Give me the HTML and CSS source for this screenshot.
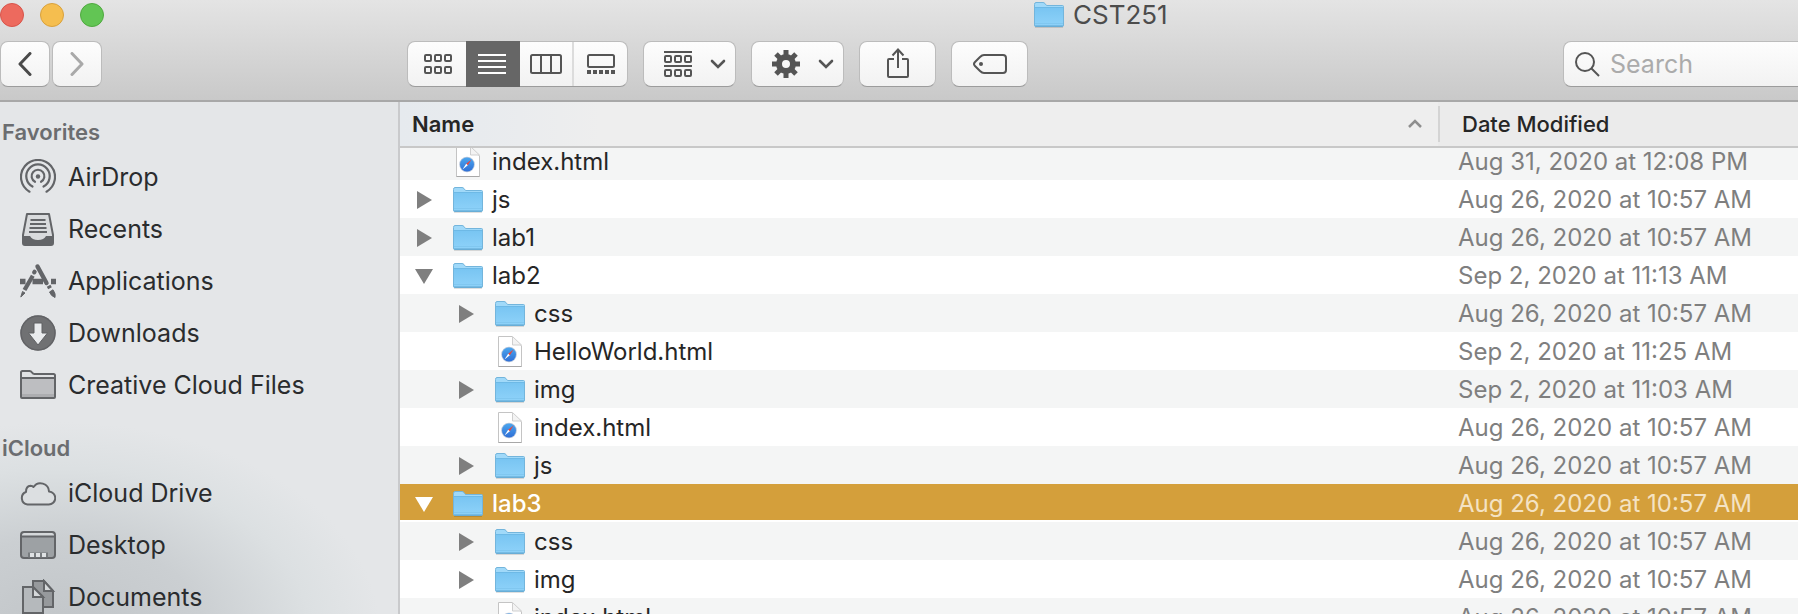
FILE: index.html
```html
<!DOCTYPE html>
<html lang="en">
<head>
<meta charset="utf-8">
<title>CST251</title>
<link rel="stylesheet" href="styles.css">
</head>
<body>
<svg class="defs" aria-hidden="true">
  <defs>
    <linearGradient id="folder-front" x1="0" y1="0" x2="0" y2="1">
      <stop offset="0" stop-color="#79c5f2"/><stop offset="1" stop-color="#8ed2f9"/>
    </linearGradient>
    <linearGradient id="compass" x1="0" y1="0" x2="0" y2="1">
      <stop offset="0" stop-color="#4ba6ee"/><stop offset="1" stop-color="#2f6fd6"/>
    </linearGradient>
    <symbol id="folder" viewBox="0 0 30 26">
      <path d="M1 25.300h28" stroke="#000" stroke-opacity=".16"/>
      <path d="M.5 23V2.500Q.5.500 2 .500H9Q10 .500 11 1.500L12.500 3.500H28.500Q29.500 3.500 29.500 4.500V23Q29.500 24.500 28.500 24.500H1.500Q.5 24.500.5 23Z" fill="#a0d9f9" stroke="#73b5dc"/>
      <path d="M1 6H29V23Q29 24 28 24H2Q1 24 1 23Z" fill="url(#folder-front)"/>
      <path d="M1 5.500H29" stroke="#6db9e6"/>
      <path d="M1 24H29" stroke="#5fa5cf"/>
      <path d="M1 21.500H29" stroke="#7cc3ec" stroke-opacity=".7"/>
    </symbol>
    <symbol id="page" viewBox="0 0 30 32">
      <path d="M3.500 .5H17L26.500 10V30.500H3.500Z" fill="#fff" stroke="#c4c4c4"/>
      <path d="M3.500 30.500H26.500" stroke="#a8a8a8"/>
      <path d="M17.500 .5V9H26.500Z" fill="#f3f3f3" stroke="#cfcfcf"/>
      <circle cx="14" cy="18.500" r="7.800" fill="#b9c7dc"/>
      <circle cx="14" cy="18.500" r="7" fill="url(#compass)"/>
      <path d="M18.500 13.500L14.800 19.200L13.200 17.700Z" fill="#f04438"/>
      <path d="M9.500 23.500L14.800 19.200L13.200 17.700Z" fill="#fff"/>
    </symbol>
    <symbol id="tri-right" viewBox="0 0 18 18"><path d="M2 0L17 9L2 18Z" fill="currentColor"/></symbol>
    <symbol id="tri-down" viewBox="0 0 18 18"><path d="M0 2H18L9 17Z" fill="currentColor"/></symbol>
    <symbol id="chevron" viewBox="0 0 16 10"><path d="M2 2L8 8L14 2" fill="none" stroke="currentColor" stroke-width="2.600" stroke-linecap="round"/></symbol>
    <symbol id="squares" viewBox="0 0 28 8">
      <g fill="none" stroke="currentColor" stroke-width="2"><rect x="1" y="1" width="6" height="6" rx="1"/><rect x="11" y="1" width="6" height="6" rx="1"/><rect x="21" y="1" width="6" height="6" rx="1"/></g>
    </symbol>
  </defs>
</svg>

<div class="window">
  <header class="toolbar">
    <div class="titlebar">
      <div class="lights">
        <button class="light close" aria-label="Close"></button>
        <button class="light minimize" aria-label="Minimize"></button>
        <button class="light zoom" aria-label="Zoom"></button>
      </div>
      <h1 class="title"><svg class="folder"><use href="#folder"/></svg>CST251</h1>
    </div>
    <div class="tools">
      <div class="history">
        <button class="tool step" aria-label="Back"><svg width="14" height="24" viewBox="0 0 14 24"><path d="M12 1.500L2 12L12 22.500" fill="none" stroke="currentColor" stroke-width="3" stroke-linecap="round" stroke-linejoin="round"/></svg></button>
        <button class="tool step" aria-label="Forward" disabled><svg width="14" height="24" viewBox="0 0 14 24"><path d="M2 1.500L12 12L2 22.500" fill="none" stroke="currentColor" stroke-width="3" stroke-linecap="round" stroke-linejoin="round"/></svg></button>
      </div>
      <div class="actions">
        <div class="segments" role="group" aria-label="View">
          <button class="segment" aria-label="Icons"><svg width="28" height="20"><use href="#squares" width="28" height="8"/><use href="#squares" y="12" width="28" height="8"/></svg></button>
          <button class="segment active" aria-label="List" aria-pressed="true"><svg width="28" height="20"><path d="M0 1H28M0 7H28M0 13H28M0 19H28" stroke="currentColor" stroke-width="2"/></svg></button>
          <button class="segment" aria-label="Columns"><svg width="32" height="20"><g fill="none" stroke="currentColor" stroke-width="2"><rect x="1" y="1" width="30" height="18" rx="1.500"/><path d="M11 1V19M21 1V19"/></g></svg></button>
          <button class="segment divided" aria-label="Gallery"><svg width="28" height="20"><rect x="1" y="1" width="26" height="12" rx="1.500" fill="none" stroke="currentColor" stroke-width="2"/><path d="M0 18H28" stroke="currentColor" stroke-width="4" stroke-dasharray="4 2"/></svg></button>
        </div>
        <button class="tool menu" aria-label="Group items"><svg width="28" height="26"><path d="M0 1H28M0 15H28" stroke="currentColor" stroke-width="2"/><use href="#squares" y="4" width="28" height="8"/><use href="#squares" y="18" width="28" height="8"/></svg><svg width="16" height="10"><use href="#chevron"/></svg></button>
        <button class="tool menu" aria-label="Actions"><svg width="28" height="28" viewBox="-14 -14 28 28"><g stroke="currentColor" stroke-width="5"><path d="M0-14V-8M0 14V8M-14 0H-8M14 0H8M-10-10L-6-6M10 10L6 6M-10 10L-6 6M10-10L6-6"/></g><circle r="7" fill="none" stroke="currentColor" stroke-width="6"/></svg><svg width="16" height="10"><use href="#chevron"/></svg></button>
        <button class="tool wide" aria-label="Share"><svg width="22" height="32" viewBox="0 0 22 32"><g fill="none" stroke="currentColor" stroke-width="2"><path d="M7 11H2Q1 11 1 12V28Q1 29 2 29H20Q21 29 21 28V12Q21 11 20 11H15M11 20V2"/><path d="M5.500 7.500L11 1.500L16.500 7.500"/></g></svg></button>
        <button class="tool wide" aria-label="Tags"><svg width="34" height="20"><path d="M11 1H30Q33 1 33 4V16Q33 19 30 19H11Q9 19 7 17L2 12Q0 10 2 8L7 3Q9 1 11 1Z" fill="none" stroke="currentColor" stroke-width="2"/><circle cx="8" cy="10" r="2" fill="currentColor"/></svg></button>
      </div>
      <label class="search">
        <svg width="26" height="26"><g fill="none" stroke="#555" stroke-width="2"><circle cx="11" cy="11" r="9"/><path d="M17.500 17.500L25 25"/></g></svg>
        <input type="search" placeholder="Search" aria-label="Search">
      </label>
    </div>
  </header>

  <div class="content">
    <nav class="sidebar">
      <section>
        <h2>Favorites</h2>
        <a href="#airdrop"><svg class="icon" viewBox="0 0 36 36"><g fill="none" stroke="currentColor" stroke-width="2.200" stroke-linecap="round"><path d="M9.500 32.700A17 17 0 1 1 26.500 32.700"/><path d="M12.500 27.500A11.700 11.700 0 1 1 23.500 27.500"/><path d="M15 22.800A6.400 6.400 0 1 1 21 22.800"/></g><circle cx="18" cy="17.500" r="2.200" fill="currentColor"/></svg>AirDrop</a>
        <a href="#recents"><svg class="icon" viewBox="0 0 36 36"><path d="M7 3H29L33 24V32Q33 34 31 34H5Q3 34 3 32V24Z" fill="#d9dbdd" stroke="currentColor" stroke-width="2" stroke-linejoin="round"/><path d="M3 25H10Q12 29 18 29T26 25H33V33Q33 34 31 34H5Q3 34 3 33Z" fill="currentColor"/><path d="M10.500 9H25.500M10 13H26M9.500 17H26.500M9 21H27" stroke="currentColor" stroke-width="1.800"/></svg>Recents</a>
        <a href="#applications"><svg class="icon" viewBox="0 0 36 36"><g stroke="currentColor" fill="currentColor"><path d="M0 18.500H5.500M12.500 18.500H23M31 18.500H36" stroke-width="5.500"/><path d="M17.500 3.500L26.500 20" stroke-width="4.400" stroke-linecap="round"/><path d="M12.800 12.800L4.500 27" stroke-width="4.200"/><path d="M14.600 8.700L14.200 9.400" stroke-width="4.200" stroke-linecap="round"/><path d="M28.600 22.800L30 25.200" stroke-width="4.200"/><path d="M2.500 28.500L5 30L.8 34Z" stroke-width="1"/><path d="M29.500 29L33 26.800Q36 31 35 34.500Q31 33 29.500 29Z" stroke-width="1"/></g></svg>Applications</a>
        <a href="#downloads"><svg class="icon" viewBox="0 0 36 36"><circle cx="18" cy="18" r="17.500" fill="#707173"/><circle cx="18" cy="18" r="17" fill="none" stroke="#626366" stroke-width="1.500"/><path d="M14 8H22V18H27.500L18 30L8.500 18H14Z" fill="#e9ebed" stroke="#5f6063" stroke-width="1"/></svg>Downloads</a>
        <a href="#creative-cloud"><svg class="icon" viewBox="0 0 36 36"><path d="M1 5.500Q1 4 2.500 4H9.500Q11 4 12 5.500T14.500 7H33.500Q35 7 35 8.500V30Q35 31 34 31H2Q1 31 1 30Z" fill="#e0e2e4"/><path d="M1 12H35V31H1Z" fill="#bdbec1"/><path d="M1 28.500H35" stroke="#acadb0" stroke-width="3"/><path d="M1 5.500Q1 4 2.500 4H9.500Q11 4 12 5.500T14.500 7H33.500Q35 7 35 8.500V30Q35 31 34 31H2Q1 31 1 30ZM1 11H35" fill="none" stroke="currentColor" stroke-width="2"/></svg>Creative Cloud Files</a>
      </section>
      <section>
        <h2>iCloud</h2>
        <a href="#icloud-drive"><svg class="icon" viewBox="0 0 36 36"><path d="M7.500 29.500A6.500 6.500 0 0 1 6 17Q6 11 10.500 10.800Q12.500 10.800 13.500 12A8.500 8.500 0 0 1 29 16.500A6.500 6.500 0 0 1 28.500 29.500Z" fill="#dcdfe1" stroke="currentColor" stroke-width="2" stroke-linejoin="round"/></svg>iCloud Drive</a>
        <a href="#desktop"><svg class="icon" viewBox="0 0 36 36"><rect x="1" y="5" width="34" height="26" rx="3" fill="#9da1a4"/><path d="M2 9V7Q2 6 4 6H32Q34 6 34 7V9Z" fill="#d5d8da"/><rect x="1" y="5" width="34" height="26" rx="3" fill="none" stroke="currentColor" stroke-width="2"/><path d="M1 9.500H35" stroke="currentColor" stroke-width="2"/><path d="M8 28H28" stroke="#777b7e" stroke-width="5"/><path d="M10 28H26" stroke="#dfe2e4" stroke-width="4" stroke-dasharray="4 2"/></svg>Desktop</a>
        <a href="#documents"><svg class="icon" viewBox="0 0 36 36"><g stroke="currentColor" stroke-width="2"><path d="M13 2H24L33 12V28H13Z" fill="#96999c"/><path d="M24 2V12H33Z" fill="#d5d8da"/><path d="M3 8H13L23 18V34H3Z" fill="#b5b9bc"/><path d="M13 8V18H23Z" fill="#d5d8da"/></g></svg>Documents</a>
      </section>
    </nav>

    <main class="listing">
      <table>
        <thead>
          <tr>
            <th class="name" aria-sort="ascending"><button>Name<svg width="16" height="10" viewBox="0 0 16 10"><path d="M2 8L8 2L14 8" fill="none" stroke="#8e8e8e" stroke-width="2.500"/></svg></button></th>
            <th class="date"><button>Date Modified</button></th>
          </tr>
        </thead>
        <tbody>
          <tr class="scrolled"><td><div class="entry"><div class="item"><span class="toggle"></span><svg class="page"><use href="#page"/></svg>index.html</div></div></td><td><div class="entry"><div class="item">Aug 31, 2020 at 12:08 PM</div></div></td></tr>
          <tr><td><div class="item"><button class="toggle" aria-label="Expand js"><svg><use href="#tri-right"/></svg></button><svg class="folder"><use href="#folder"/></svg>js</div></td><td>Aug 26, 2020 at 10:57 AM</td></tr>
          <tr><td><div class="item"><button class="toggle" aria-label="Expand lab1"><svg><use href="#tri-right"/></svg></button><svg class="folder"><use href="#folder"/></svg>lab1</div></td><td>Aug 26, 2020 at 10:57 AM</td></tr>
          <tr><td><div class="item"><button class="toggle" aria-label="Collapse lab2"><svg><use href="#tri-down"/></svg></button><svg class="folder"><use href="#folder"/></svg>lab2</div></td><td>Sep 2, 2020 at 11:13 AM</td></tr>
          <tr><td><div class="item nested"><button class="toggle" aria-label="Expand css"><svg><use href="#tri-right"/></svg></button><svg class="folder"><use href="#folder"/></svg>css</div></td><td>Aug 26, 2020 at 10:57 AM</td></tr>
          <tr><td><div class="item nested"><span class="toggle"></span><svg class="page"><use href="#page"/></svg>HelloWorld.html</div></td><td>Sep 2, 2020 at 11:25 AM</td></tr>
          <tr><td><div class="item nested"><button class="toggle" aria-label="Expand img"><svg><use href="#tri-right"/></svg></button><svg class="folder"><use href="#folder"/></svg>img</div></td><td>Sep 2, 2020 at 11:03 AM</td></tr>
          <tr><td><div class="item nested"><span class="toggle"></span><svg class="page"><use href="#page"/></svg>index.html</div></td><td>Aug 26, 2020 at 10:57 AM</td></tr>
          <tr><td><div class="item nested"><button class="toggle" aria-label="Expand js"><svg><use href="#tri-right"/></svg></button><svg class="folder"><use href="#folder"/></svg>js</div></td><td>Aug 26, 2020 at 10:57 AM</td></tr>
          <tr class="selected"><td><div class="item"><button class="toggle" aria-label="Collapse lab3"><svg><use href="#tri-down"/></svg></button><svg class="folder"><use href="#folder"/></svg>lab3</div></td><td>Aug 26, 2020 at 10:57 AM</td></tr>
          <tr><td><div class="item nested"><button class="toggle" aria-label="Expand css"><svg><use href="#tri-right"/></svg></button><svg class="folder"><use href="#folder"/></svg>css</div></td><td>Aug 26, 2020 at 10:57 AM</td></tr>
          <tr><td><div class="item nested"><button class="toggle" aria-label="Expand img"><svg><use href="#tri-right"/></svg></button><svg class="folder"><use href="#folder"/></svg>img</div></td><td>Aug 26, 2020 at 10:57 AM</td></tr>
          <tr><td><div class="item nested"><span class="toggle"></span><svg class="page"><use href="#page"/></svg>index.html</div></td><td>Aug 26, 2020 at 10:57 AM</td></tr>
        </tbody>
      </table>
    </main>
  </div>
</div>
</body>
</html>
```
FILE: styles.css
```css
* { box-sizing: border-box; }

body {
  margin: 0;
  font-family: Inter, "Liberation Sans", sans-serif;
  font-size: 24px;
  color: #262626;
  background: #fff;
}

button {
  margin: 0;
  padding: 0;
  border: 0;
  background: none;
  font: inherit;
  color: inherit;
}

svg { display: block; flex: none; }
.defs { position: absolute; width: 0; height: 0; }

.window {
  display: flex;
  flex-direction: column;
  height: 100vh;
  overflow: hidden;
}

/* Toolbar */
.toolbar {
  flex: none;
  padding-bottom: 13px;
  background: linear-gradient(#e4e4e4, #c9c9c9);
  border-bottom: 2px solid #a8a8a8;
}

.titlebar {
  display: grid;
  grid-template-columns: auto 931fr auto 631fr;
  align-items: center;
  height: 28px;
}

.lights { display: flex; gap: 16px; }
.light { width: 24px; height: 24px; border-radius: 50%; border: 1px solid; }
.close { background: #ed6a5e; border-color: #d8544a; }
.minimize { background: #f5be4f; border-color: #d9a13c; }
.zoom { background: #62c554; border-color: #4fa93f; }

.title {
  grid-column: 3;
  display: flex;
  align-items: center;
  gap: 9px;
  margin: 0;
  font-size: 26px;
  line-height: 30px;
  font-weight: 400;
  color: #4c4c4c;
}

.folder { width: 30px; height: 26px; }
.page { width: 30px; height: 32px; }

.tools {
  display: flex;
  align-items: center;
  margin-top: 13px;
}

.history { display: flex; gap: 2px; margin-right: 305px; }
.actions { display: flex; gap: 15px; color: #555; }

.tool, .segments, .search {
  height: 46px;
  border: 1px solid #bcbcbc;
  border-bottom-color: #9c9c9c;
  border-radius: 8px;
  background: linear-gradient(#fdfdfd, #f2f2f2);
}

.tool { display: flex; align-items: center; justify-content: center; }
.step { width: 50px; color: #4a4a4a; }
.step:disabled { color: #a9a9a9; }
.menu { width: 93px; justify-content: space-between; padding: 0 9px 0 20px; }
.wide { width: 77px; }

.segments {
  display: grid;
  grid-template-columns: 58px 54px 52px 55px;
}

.segment { display: flex; align-items: center; justify-content: center; }
.segment:first-child { padding-left: 2px; }
.active { background: #666; color: #fff; margin: -1px 0; padding-right: 2px; }
.divided { border-left: 2px solid #dcdcdc; }

.search {
  display: flex;
  align-items: center;
  gap: 10px;
  width: 235px;
  margin-left: auto;
  padding-left: 10px;
  border-right: 0;
  border-radius: 8px 0 0 8px;
}

.search input {
  width: 100%;
  min-width: 0;
  padding: 0;
  border: 0;
  outline: 0;
  background: none;
  font: inherit;
  font-size: 25px;
}
.search input::placeholder { color: #ababab; }

/* Sidebar */
.content { display: flex; flex: 1; min-height: 0; }

.sidebar {
  flex: none;
  width: 400px;
  overflow: hidden;
  padding-top: 13px;
  border-right: 2px solid #c9cacc;
  background:
    radial-gradient(ellipse 320px 210px at 60px 530px, #c1c5c8 0%, #cbcfd2 45%, #dce0e2 78%, rgba(228, 230, 232, 0) 100%),
    #e4e6e8;
}

.sidebar section + section { margin-top: 20px; }

.sidebar h2 {
  margin: 0;
  padding: 0 0 2px 2px;
  font-size: 22px;
  line-height: 34px;
  font-weight: 600;
  color: #6b6d70;
}

.sidebar a {
  display: flex;
  align-items: center;
  gap: 12px;
  height: 52px;
  padding-left: 20px;
  font-size: 25px;
  color: #2a2c2e;
  text-decoration: none;
}

.icon { width: 36px; height: 36px; color: #636568; }

/* File list */
.listing { flex: 1; min-width: 0; overflow: hidden; }

table { width: 100%; table-layout: fixed; border-spacing: 0; }

th {
  height: 46px;
  padding: 0;
  border-bottom: 2px solid #c8c8c8;
  background: #eee;
  font-size: 22px;
  text-align: left;
}
th.name { background: linear-gradient(90deg, #e6eaee 0, #e8ebee 80px, #eee 200px); font-weight: 600; }
th.date { width: 360px; background: #ebebeb; font-weight: 500; }

th button {
  display: flex;
  align-items: center;
  justify-content: space-between;
  width: 100%;
  height: 36px;
  padding: 0 15px 0 12px;
}
.date button { border-left: 2px solid #d4d4d4; padding-left: 22px; }

td { height: 38px; padding: 2px 0 0; white-space: nowrap; line-height: 28px; }
td:last-child { padding-left: 20px; color: #7f7f7f; }
tbody tr:nth-child(odd) { background: #f4f5f5; }

.item { display: flex; align-items: center; gap: 9px; height: 36px; padding-left: 15px; }
td:last-child .item { padding-left: 0; }
.nested { padding-left: 57px; }

.toggle { display: block; width: 18px; height: 18px; margin-right: 11px; color: #7f7f7f; }
.toggle svg { width: 18px; height: 18px; }

/* Topmost row, partly scrolled under the header */
.scrolled td { height: 32px; padding-top: 0; }
.entry { display: flex; flex-direction: column; justify-content: flex-end; height: 32px; overflow: hidden; }
.entry .item { flex: none; }

tbody .selected { background: #d49f3b; color: #fff; }
.selected td { box-shadow: inset 0 -2px #fff; }
.selected td:last-child { color: #f4e3c4; }
.selected .toggle { color: #fff; }
.selected td:first-child { font-weight: 500; }
```
